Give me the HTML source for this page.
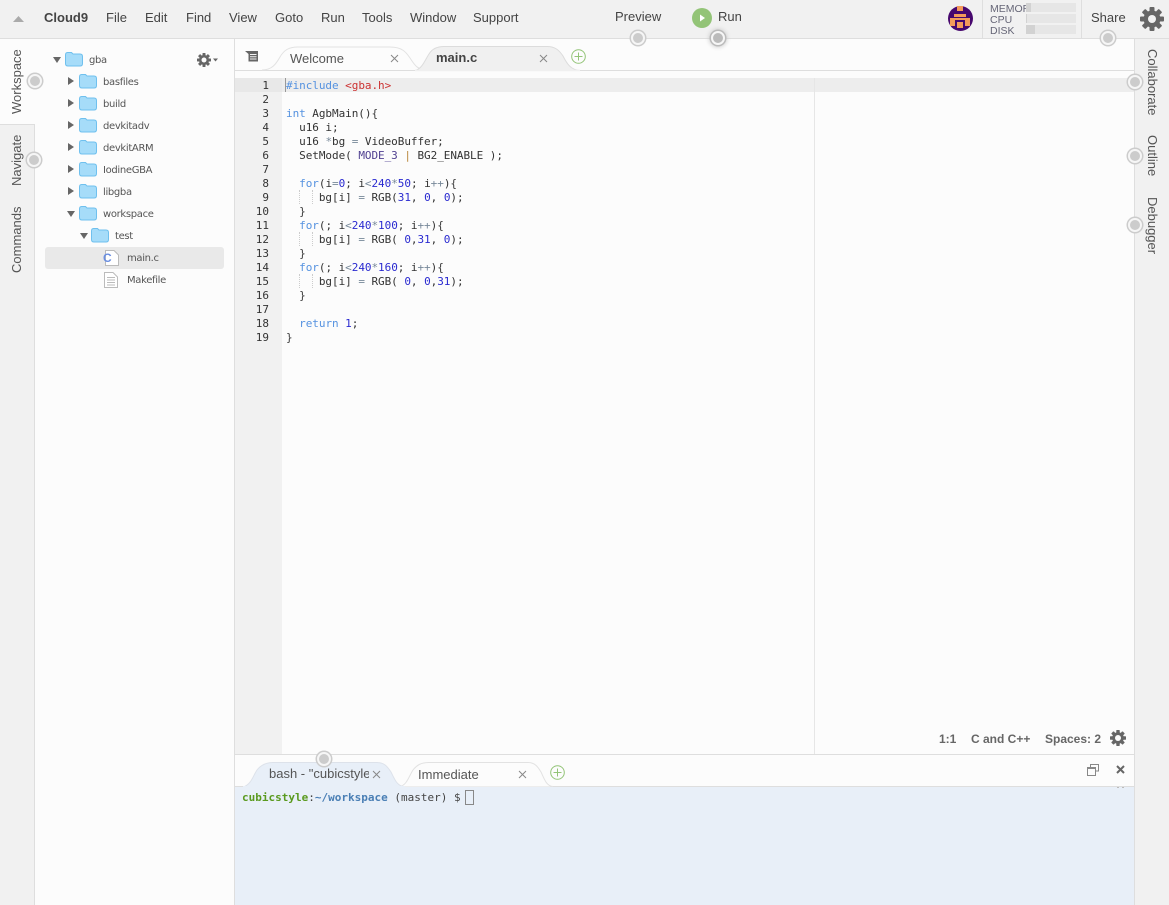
<!DOCTYPE html>
<html><head><meta charset="utf-8"><style>
html,body{margin:0;padding:0}
body{width:1169px;height:905px;overflow:hidden;position:relative;background:#fcfcfc;font-family:"Liberation Sans",sans-serif;color:#444}
.a{position:absolute}
.t{position:absolute;white-space:nowrap}
.m{font-size:13px;top:11px;color:#444;line-height:14px}
.tree{font-family:"DejaVu Sans",sans-serif;font-size:10px;letter-spacing:-.33px;line-height:14px;color:#555;position:absolute;white-space:nowrap;margin-top:1px}
.v{position:absolute;font-size:13px;line-height:14px;color:#555;white-space:nowrap;transform-origin:0 0}
.dot{position:absolute;box-sizing:content-box;width:10px;height:10px;border-radius:50%;background:#ccc;border:2px solid #f6f6f6;box-shadow:0 0 0 1.5px #ccc;margin:-7px 0 0 -7px}
.code{position:absolute;left:286px;top:79px;font-family:"DejaVu Sans Mono",monospace;font-size:11px;line-height:14px;white-space:pre;color:#333;letter-spacing:-.05px}
.nums{position:absolute;left:235px;width:34px;top:79px;text-align:right;font-family:"DejaVu Sans Mono",monospace;font-size:11px;line-height:14px;color:#333;white-space:pre}
.k{color:#5592e0}.n{color:#2a2ad0}.s{color:#c33}.o{color:#789}.b{color:#3a3a3a}.p{color:#b8863a}.d{color:#4f3f90}
</style></head><body>
<!-- top bar -->
<div class="a" style="left:0;top:0;width:1169px;height:38px;background:#f1f1f1;border-bottom:1px solid #dedede"></div>
<svg class="a" style="left:13px;top:15px" width="12" height="8"><path d="M0 7 L5.500 1 L11 7Z" fill="#aaa"/></svg>
<div class="t m" style="left:44px;font-weight:bold;color:#444">Cloud9</div>
<div class="t m" style="left:106px">File</div>
<div class="t m" style="left:145px">Edit</div>
<div class="t m" style="left:186px">Find</div>
<div class="t m" style="left:229px">View</div>
<div class="t m" style="left:275px">Goto</div>
<div class="t m" style="left:321px">Run</div>
<div class="t m" style="left:362px">Tools</div>
<div class="t m" style="left:410px">Window</div>
<div class="t m" style="left:473px">Support</div>
<div class="t m" style="left:615px;top:10px">Preview</div>
<svg class="a" style="left:692px;top:8px" width="20" height="20"><circle cx="10" cy="10" r="10" fill="#93c477"/><path d="M8 6.500 L13 10 L8 13.500Z" fill="#fff"/></svg>
<div class="t m" style="left:718px;top:10px">Run</div>
<!-- avatar -->
<svg class="a" style="left:948px;top:6px" width="25" height="25" shape-rendering="crispEdges"><circle cx="12.500" cy="12.500" r="12.500" fill="#47086e" shape-rendering="auto"/><path d="M9 0h6v5h-6zM6 8h12v3h-12zM2 12h20v2h-20zM2 14h5v6h-5zM17 14h5v6h-5zM9 16h6v6h-6z" fill="#f49a5a"/></svg>
<div class="a" style="left:982px;top:0;width:1px;height:38px;background:#dedede"></div>
<div class="a" style="left:1081px;top:0;width:1px;height:38px;background:#dedede"></div>
<div class="t" style="left:990px;top:3px;font-size:10.500px;line-height:11px;color:#667;width:36px;overflow:hidden;height:34px"><div style="position:relative;top:.5px">MEMORY<br>CPU<br>DISK</div></div>
<div class="a" style="left:1026px;top:3px;width:50px;height:9px;background:#e6e6e6"><div style="width:5px;height:9px;background:#d2d2d2"></div></div>
<div class="a" style="left:1026px;top:14px;width:50px;height:9px;background:#e6e6e6"><div style="width:1px;height:9px;background:#d2d2d2"></div></div>
<div class="a" style="left:1026px;top:25px;width:50px;height:9px;background:#e6e6e6"><div style="width:9px;height:9px;background:#d2d2d2"></div></div>
<div class="t m" style="left:1091px">Share</div>
<svg class="a" style="left:1140px;top:7px" width="24" height="24" viewBox="0 0 24 24"><g fill="#666"><circle cx="12" cy="12" r="8.500"/><rect x="9.500" y="0" width="5" height="24" rx="1"/><rect x="9.500" y="0" width="5" height="24" rx="1" transform="rotate(45 12 12)"/><rect x="9.500" y="0" width="5" height="24" rx="1" transform="rotate(90 12 12)"/><rect x="9.500" y="0" width="5" height="24" rx="1" transform="rotate(135 12 12)"/></g><circle cx="12" cy="12" r="4" fill="#f1f1f1"/></svg>

<!-- left rail -->
<div class="a" style="left:0;top:39px;width:34px;height:866px;background:#f1f1f1;border-right:1px solid #dedede"></div>
<div class="a" style="left:0;top:39px;width:35px;height:85px;background:#fcfcfc"></div>
<div class="a" style="left:0;top:124px;width:34px;height:1px;background:#dedede"></div>
<div class="v" style="left:10px;top:114px;transform:rotate(-90deg)">Workspace</div>
<div class="v" style="left:10px;top:186px;transform:rotate(-90deg)">Navigate</div>
<div class="v" style="left:10px;top:273px;transform:rotate(-90deg)">Commands</div>

<!-- tree -->
<div class="a" style="left:234px;top:39px;width:1px;height:866px;background:#dedede"></div>
<div class="a" style="left:45px;top:247px;width:179px;height:22px;background:#e9e9e9;border-radius:3px"></div>
<svg class="a" style="left:45px;top:50px" width="190" height="240">
<defs><g id="f"><path d="M.5 3 Q.5 .5 2.500 .5 H6.500 L8 2 H15 Q17.500 2 17.500 4.500 V11.500 Q17.500 14 15 14 H3 Q.5 14 .5 11.500Z" fill="#a6dcf9" stroke="#6fc0ee"/></g>
<path id="r" d="M0 0 L6 4 L0 8Z" fill="#666"/><path id="dn" d="M0 0 L8 0 L4 6Z" fill="#666"/></defs>
<use href="#dn" x="8" y="7"/><use href="#f" x="20" y="2"/>
<use href="#r" x="23" y="27"/><use href="#f" x="34" y="24"/>
<use href="#r" x="23" y="49"/><use href="#f" x="34" y="46"/>
<use href="#r" x="23" y="71"/><use href="#f" x="34" y="68"/>
<use href="#r" x="23" y="93"/><use href="#f" x="34" y="90"/>
<use href="#r" x="23" y="115"/><use href="#f" x="34" y="112"/>
<use href="#r" x="23" y="137"/><use href="#f" x="34" y="134"/>
<use href="#dn" x="22" y="161"/><use href="#f" x="34" y="156"/>
<use href="#dn" x="35" y="183"/><use href="#f" x="46" y="178"/>
<path d="M60.500 200.500 H69 L73.500 205 V215.500 H60.500Z" fill="#fff" stroke="#bbb"/>
<path d="M59.500 222.500 H68 L72.500 227 V237.500 H59.500Z" fill="#fff" stroke="#bbb"/>
<path d="M62 227.500H70M62 230H70M62 232.500H70M62 235H70" stroke="#bbb"/>
</svg>
<div class="t" style="left:103px;top:251px;font:bold 12px 'Liberation Sans',sans-serif;color:#6a8ee0">C</div>
<div class="tree" style="left:89px;top:53px">gba</div>
<div class="tree" style="left:103px;top:75px">basfiles</div>
<div class="tree" style="left:103px;top:97px">build</div>
<div class="tree" style="left:103px;top:119px">devkitadv</div>
<div class="tree" style="left:103px;top:141px">devkitARM</div>
<div class="tree" style="left:103px;top:163px">IodineGBA</div>
<div class="tree" style="left:103px;top:185px">libgba</div>
<div class="tree" style="left:103px;top:207px">workspace</div>
<div class="tree" style="left:115px;top:229px">test</div>
<div class="tree" style="left:127px;top:251px">main.c</div>
<div class="tree" style="left:127px;top:273px">Makefile</div>
<svg class="a" style="left:197px;top:53px" width="23" height="14" viewBox="0 0 23 14"><g fill="#666"><circle cx="7" cy="7" r="5"/><rect x="5.500" y="0" width="3" height="14" rx=".5"/><rect x="5.500" y="0" width="3" height="14" rx=".5" transform="rotate(45 7 7)"/><rect x="5.500" y="0" width="3" height="14" rx=".5" transform="rotate(90 7 7)"/><rect x="5.500" y="0" width="3" height="14" rx=".5" transform="rotate(135 7 7)"/><path d="M16 5.500H21L18.500 8.500Z"/></g><circle cx="7" cy="7" r="2.500" fill="#fcfcfc"/></svg>

<!-- editor tabs -->
<div class="a" style="left:235px;top:70px;width:899px;height:1px;background:#dedede"></div>
<svg class="a" style="left:245px;top:50px" width="15" height="13"><path d="M0 1H13V11.500H3.500V4L0 1Z" fill="#666"/><path d="M5 4.500H11.500M5 6.800H11.500M5 9H11.500" stroke="#f4f4f4"/></svg>
<svg class="a" style="left:262px;top:44px" width="320" height="28">
<path d="M0 26 C10 26 14 20 18 13 C22 6 27 3 36 3 H128 C140 3 144 8 148 14 C152 20 155 26 165 26" fill="#fcfcfc" stroke="#e2e2e2"/>
<path d="M153 26.500 C160 25 163 16 167 10 C170 5 175 2.500 182 2.500 H285 C293 2.500 297 6 301 12 C305 20 309 26 318 26.500Z" fill="#f0f0f0" stroke="#dcdcdc"/>
<path d="M153 26.500H318" stroke="#f0f0f0" stroke-width="1.500"/>
</svg>
<div class="t" style="left:290px;top:52px;font-size:13px;line-height:14px;color:#555">Welcome</div>
<div class="t" style="left:436px;top:51px;font-size:13px;line-height:14px;color:#444;font-weight:bold">main.c</div>
<svg class="a" style="left:390px;top:54px" width="9" height="9"><path d="M1 1L8 8M8 1L1 8" stroke="#888" fill="none"/></svg>
<svg class="a" style="left:539px;top:54px" width="9" height="9"><path d="M1 1L8 8M8 1L1 8" stroke="#888" fill="none"/></svg>
<svg class="a" style="left:571px;top:49px" width="15" height="15"><circle cx="7.500" cy="7.500" r="6.800" fill="none" stroke="#93c477"/><path d="M7.500 3.500V11.500M3.500 7.500H11.500" stroke="#93c477"/></svg>

<!-- editor -->
<div class="a" style="left:235px;top:78px;width:47px;height:676px;background:#f1f1f1"></div>
<div class="a" style="left:235px;top:78px;width:899px;height:14px;background:#ededed"></div>
<div class="a" style="left:235px;top:78px;width:47px;height:14px;background:#e8e8e8"></div>
<div class="a" style="left:814px;top:78px;width:1px;height:676px;background:#e6e6e6"></div>
<div class="a" style="left:285px;top:78px;width:1px;height:14px;background:#999"></div>
<div class="a" style="left:299px;top:190px;height:14px;border-left:1px dotted #ccc"></div>
<div class="a" style="left:299px;top:232px;height:14px;border-left:1px dotted #ccc"></div>
<div class="a" style="left:299px;top:274px;height:14px;border-left:1px dotted #ccc"></div>
<div class="a" style="left:312px;top:190px;height:14px;border-left:1px dotted #ccc"></div>
<div class="a" style="left:312px;top:232px;height:14px;border-left:1px dotted #ccc"></div>
<div class="a" style="left:312px;top:274px;height:14px;border-left:1px dotted #ccc"></div>
<div class="nums">1
2
3
4
5
6
7
8
9
10
11
12
13
14
15
16
17
18
19</div>
<div class="code"><span class="k">#include</span> <span class="s">&lt;gba.h&gt;</span>

<span class="k">int</span> AgbMain()<span class="b">{</span>
  u16 i;
  u16 <span class="o">*</span>bg <span class="o">=</span> VideoBuffer;
  SetMode( <span class="d">MODE_3</span> <span class="p">|</span> BG2_ENABLE );

  <span class="k">for</span>(i<span class="o">=</span><span class="n">0</span>; i<span class="o">&lt;</span><span class="n">240</span><span class="o">*</span><span class="n">50</span>; i<span class="o">++</span>)<span class="b">{</span>
     bg[i] <span class="o">=</span> RGB(<span class="n">31</span>, <span class="n">0</span>, <span class="n">0</span>);
  <span class="b">}</span>
  <span class="k">for</span>(; i<span class="o">&lt;</span><span class="n">240</span><span class="o">*</span><span class="n">100</span>; i<span class="o">++</span>)<span class="b">{</span>
     bg[i] <span class="o">=</span> RGB( <span class="n">0</span>,<span class="n">31</span>, <span class="n">0</span>);
  <span class="b">}</span>
  <span class="k">for</span>(; i<span class="o">&lt;</span><span class="n">240</span><span class="o">*</span><span class="n">160</span>; i<span class="o">++</span>)<span class="b">{</span>
     bg[i] <span class="o">=</span> RGB( <span class="n">0</span>, <span class="n">0</span>,<span class="n">31</span>);
  <span class="b">}</span>

  <span class="k">return</span> <span class="n">1</span>;
<span class="b">}</span></div>

<!-- status -->
<div class="t" style="left:939px;top:732px;font-size:12px;line-height:14px;color:#666;font-weight:bold">1:1</div>
<div class="t" style="left:971px;top:732px;font-size:12px;line-height:14px;color:#666;font-weight:bold">C and C++</div>
<div class="t" style="left:1045px;top:732px;font-size:12px;line-height:14px;color:#666;font-weight:bold">Spaces: 2</div>
<svg class="a" style="left:1110px;top:730px" width="16" height="16" viewBox="0 0 16 16"><g fill="#666"><circle cx="8" cy="8" r="5.800"/><rect x="6.300" y="0" width="3.400" height="16" rx=".6"/><rect x="6.300" y="0" width="3.400" height="16" rx=".6" transform="rotate(45 8 8)"/><rect x="6.300" y="0" width="3.400" height="16" rx=".6" transform="rotate(90 8 8)"/><rect x="6.300" y="0" width="3.400" height="16" rx=".6" transform="rotate(135 8 8)"/></g><circle cx="8" cy="8" r="3" fill="#fcfcfc"/></svg>

<!-- console -->
<div class="a" style="left:235px;top:754px;width:899px;height:1px;background:#dedede"></div>
<div class="a" style="left:235px;top:786px;width:899px;height:119px;background:#e8eff8;border-top:1px solid #dedede;box-sizing:border-box"></div>
<svg class="a" style="left:237px;top:760px" width="320" height="28">
<path d="M163 26.500 C170 25 172 16 176 10 C180 5 184 2.500 192 2.500 H291 C298 2.500 301 7 304 12 C307 18 309 26 316 26.500" fill="#fcfcfc" stroke="#e2e2e2"/>
<path d="M6 27 C14 25 16 16 20 10 C24 5 29 2.500 36 2.500 H140 C147 2.500 150 6 154 12 C158 20 160 26 168 27Z" fill="#e8eff8" stroke="#dde2ea"/>
<path d="M6 27H168" stroke="#e8eff8" stroke-width="2"/>
</svg>
<div class="t" style="left:269px;top:767px;font-size:13px;line-height:14px;color:#555;width:100px;overflow:hidden">bash - "cubicstyle</div>
<div class="t" style="left:418px;top:768px;font-size:13px;line-height:14px;color:#555">Immediate</div>
<svg class="a" style="left:372px;top:770px" width="9" height="9"><path d="M1 1L8 8M8 1L1 8" stroke="#888" fill="none"/></svg>
<svg class="a" style="left:518px;top:770px" width="9" height="9"><path d="M1 1L8 8M8 1L1 8" stroke="#888" fill="none"/></svg>
<svg class="a" style="left:550px;top:765px" width="15" height="15"><circle cx="7.500" cy="7.500" r="6.800" fill="none" stroke="#93c477"/><path d="M7.500 3.500V11.500M3.500 7.500H11.500" stroke="#93c477"/></svg>
<svg class="a" style="left:1087px;top:764px" width="12" height="12"><path d="M3.500 3V.5H11.500V7H9M.5 3.500H8.500V11.500H.5Z" fill="none" stroke="#888"/><path d="M1 4H8" stroke="#888" stroke-width="2"/></svg>
<svg class="a" style="left:1116px;top:765px" width="9" height="9"><path d="M1 1L8 8M8 1L1 8" stroke="#666" stroke-width="2" fill="none"/></svg>
<div class="a" style="left:1117px;top:787px;width:2px;height:1px;background:#bbb"></div>
<div class="a" style="left:1122px;top:787px;width:2px;height:1px;background:#bbb"></div>
<div class="t" style="left:242px;top:791px;font-family:'DejaVu Sans Mono',monospace;font-size:11px;line-height:14px;color:#444"><b style="color:#5a9a1f">cubicstyle</b>:<b style="color:#4a7fb5">~/workspace</b> (master) $</div>
<div class="a" style="left:465px;top:790px;width:9px;height:15px;border:1px solid #888;box-sizing:border-box"></div>

<!-- right rail -->
<div class="a" style="left:1134px;top:39px;width:35px;height:866px;background:#f1f1f1;border-left:1px solid #dedede;box-sizing:border-box"></div>
<div class="v" style="left:1159px;top:49px;transform:rotate(90deg)">Collaborate</div>
<div class="v" style="left:1159px;top:135px;transform:rotate(90deg)">Outline</div>
<div class="v" style="left:1159px;top:197px;transform:rotate(90deg)">Debugger</div>

<!-- hint dots -->
<div class="dot" style="left:35px;top:81px"></div>
<div class="dot" style="left:34px;top:160px"></div>
<div class="dot" style="left:638px;top:38px"></div>
<div class="dot" style="left:718px;top:38px;background:#bbb;box-shadow:0 0 0 1.500px #bbb,0 0 4px 2px #ccc"></div>
<div class="dot" style="left:1108px;top:38px"></div>
<div class="dot" style="left:1135px;top:82px"></div>
<div class="dot" style="left:1135px;top:156px"></div>
<div class="dot" style="left:1135px;top:225px"></div>
<div class="dot" style="left:324px;top:759px"></div>
</body></html>
